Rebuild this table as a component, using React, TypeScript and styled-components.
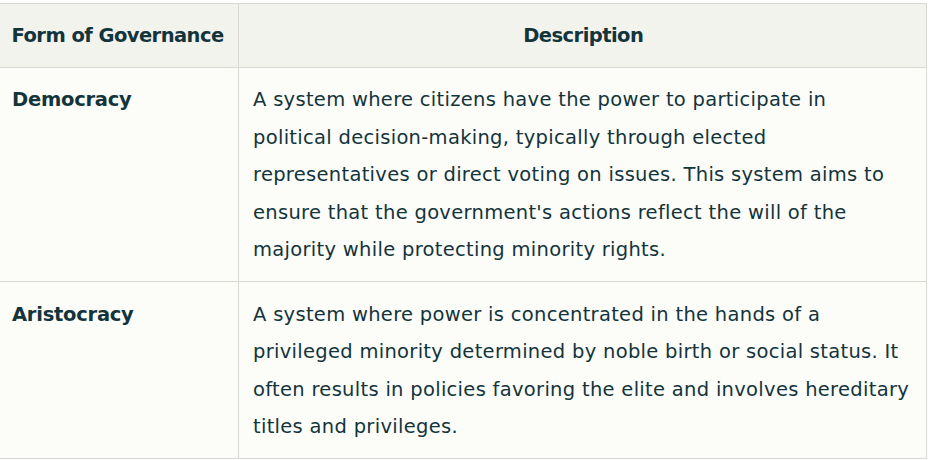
import React from "react";
import styled, { createGlobalStyle } from "styled-components";

const Global = createGlobalStyle`
  html, body { margin: 0; padding: 0; background: #ffffff; }
  body { font-family: "DejaVu Sans", "Liberation Sans", Arial, sans-serif; }
`;

const Wrap = styled.div`
  padding-top: 3px;
  margin-left: -1px;
  width: 928px;
`;

const Table = styled.table`
  width: 100%;
  border-collapse: collapse;
  background: #fcfcf9;
  color: #13343b;
  font-family: "DejaVu Sans", "Liberation Sans", Arial, sans-serif;
  font-size: 19.5px;
  line-height: 37.5px;
  letter-spacing: 0.3px;
  table-layout: fixed;
`;

const HeadCell = styled.th<{ $center?: boolean }>`
  background: #f3f3ee;
  border: 1px solid #d9d9d4;
  font-weight: 700;
  letter-spacing: -0.55px;
  white-space: nowrap;
  text-align: ${(p) => (p.$center ? "center" : "left")};
  padding: 12.5px 10px 12.5px 11.5px;
`;

const LabelCell = styled.td`
  border: 1px solid #d9d9d4;
  font-weight: 700;
  letter-spacing: -0.25px;
  vertical-align: top;
  padding: 13.5px 12px 12.5px;
`;

const TextCell = styled.td`
  border: 1px solid #d9d9d4;
  font-weight: 400;
  vertical-align: top;
  padding: 13.5px 16.5px 12.5px 14px;
`;

const rows = [
  {
    name: "Democracy",
    text: "A system where citizens have the power to participate in political decision-making, typically through elected representatives or direct voting on issues. This system aims to ensure that the government's actions reflect the will of the majority while protecting minority rights.",
  },
  {
    name: "Aristocracy",
    text: "A system where power is concentrated in the hands of a privileged minority determined by noble birth or social status. It often results in policies favoring the elite and involves hereditary titles and privileges.",
  },
];

export default function App() {
  return (
    <>
      <Global />
      <Wrap>
        <Table>
          <colgroup>
            <col style={{ width: 239 }} />
            <col />
          </colgroup>
          <thead>
            <tr>
              <HeadCell>Form of Governance</HeadCell>
              <HeadCell $center>Description</HeadCell>
            </tr>
          </thead>
          <tbody>
            {rows.map((r) => (
              <tr key={r.name}>
                <LabelCell>{r.name}</LabelCell>
                <TextCell>{r.text}</TextCell>
              </tr>
            ))}
          </tbody>
        </Table>
      </Wrap>
    </>
  );
}
